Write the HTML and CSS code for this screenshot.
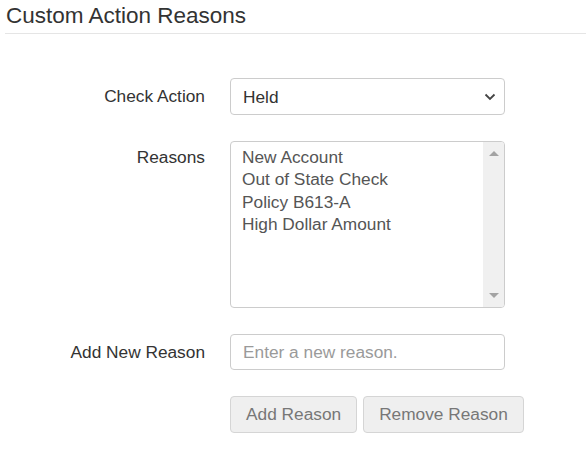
FILE: index.html
```html
<!DOCTYPE html>
<html lang="en">
<head>
    <meta charset="UTF-8">
    <meta name="viewport" content="width=device-width, initial-scale=1.0">
    <title>Custom Action Reasons</title>
    <link rel="stylesheet" href="styles.css">
</head>
<body>
    <div class="page-header">
        <h4>Custom Action Reasons</h4>
    </div>

    <form class="reason-form">
        <div class="form-row">
            <label class="row-label" for="actionSelect">Check Action</label>
            <select id="actionSelect" class="form-control select-control">
                <option>Held</option>
                <option>Returned</option>
                <option>Approved</option>
            </select>
        </div>

        <div class="form-row">
            <label class="row-label label-top">Reasons</label>
            <div class="list-box">
                <div class="list-items">
                    <div class="list-item">New Account</div>
                    <div class="list-item">Out of State Check</div>
                    <div class="list-item">Policy B613-A</div>
                    <div class="list-item">High Dollar Amount</div>
                </div>
                <div class="list-scroll">
                    <span class="arrow arrow-up"></span>
                    <span class="arrow arrow-down"></span>
                </div>
            </div>
        </div>

        <div class="form-row">
            <label class="row-label" for="newReason">Add New Reason</label>
            <input type="text" id="newReason" class="form-control" placeholder="Enter a new reason.">
        </div>

        <div class="form-row">
            <span class="row-label"></span>
            <div class="btn-group">
                <button type="button" class="btn" disabled>Add Reason</button>
                <button type="button" class="btn" disabled>Remove Reason</button>
            </div>
        </div>
    </form>
</body>
</html>
```

FILE: styles.css
```css
body { margin: 0; font-family: "Liberation Sans", Arial, sans-serif; font-size: 17.3px; color: #333; background: #fff; }
.page-header { margin-left: 5px; border-bottom: 1px solid #e5e5e5; height: 33px; }
.page-header h4 { margin: 0; padding: 3px 0 0 1px; font-size: 22.5px; font-weight: normal; line-height: 26px; color: #333; }

.reason-form { padding-top: 44px; }
.form-row { display: flex; align-items: center; gap: 25px; margin-bottom: 26px; }
.row-label { width: 205px; flex: none; text-align: right; }
.label-top { align-self: flex-start; padding-top: 6px; }

.form-control {
    width: 275px;
    box-sizing: border-box;
    border: 1px solid #ccc;
    border-radius: 4px;
    padding: 0 12px;
    font-family: inherit;
    font-size: 17.3px;
    color: #555;
    background: #fff;
}
input.form-control { height: 36px; }
input.form-control::placeholder { color: #9a9a9a; }
.select-control {
    height: 37px;
    appearance: none;
    -webkit-appearance: none;
    color: #333;
    background: #fff url("data:image/svg+xml,%3Csvg xmlns='http://www.w3.org/2000/svg' width='12' height='8' viewBox='0 0 12 8'%3E%3Cpath d='M1.5 1.5l4.5 4.5 4.5-4.5' fill='none' stroke='%23444' stroke-width='1.8'/%3E%3C/svg%3E") no-repeat right 8px center;
}

.list-box { width: 275px; height: 167px; box-sizing: border-box; border: 1px solid #ccc; border-radius: 4px; display: flex; overflow: hidden; }
.list-items { flex: 1; padding: 4px 11px; color: #555; }
.list-item { line-height: 22.4px; }
.list-scroll { width: 21px; background: #f0f0f0; position: relative; }
.arrow { position: absolute; left: 6px; width: 0; height: 0; border-left: 5px solid transparent; border-right: 5px solid transparent; }
.arrow-up { top: 9px; border-bottom: 5px solid #a3a3a3; }
.arrow-down { bottom: 9px; border-top: 5px solid #a3a3a3; }

.btn-group { display: flex; gap: 6px; }
.btn {
    height: 37px;
    padding: 0 15px;
    font-family: inherit;
    font-size: 17.3px;
    color: #777;
    background: #efefef;
    border: 1px solid #d5d5d5;
    border-radius: 4px;
}
```
